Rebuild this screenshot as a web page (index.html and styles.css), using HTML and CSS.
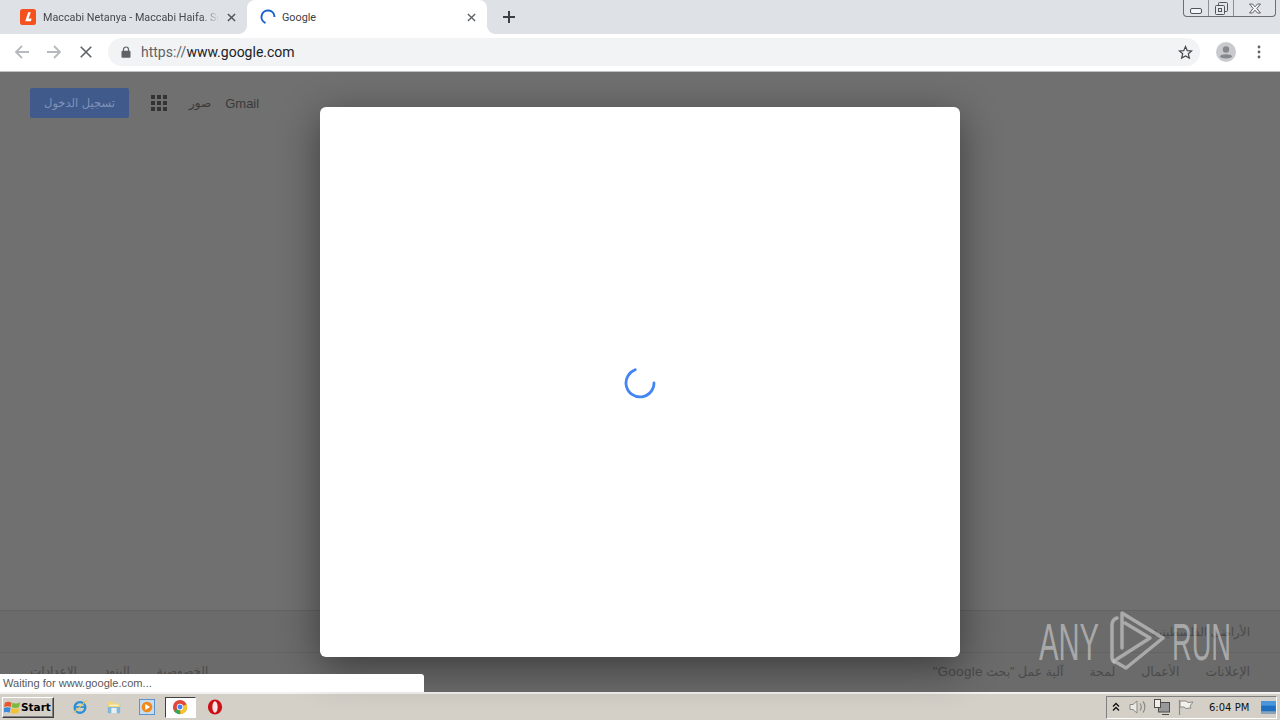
FILE: index.html
```html
<!DOCTYPE html>
<html lang="en">
<head>
<meta charset="utf-8">
<title>Google</title>
<link rel="stylesheet" href="styles.css">
</head>
<body>
<div class="screen">
  <header class="tabstrip">
    <div class="tab tab-inactive">
      <svg class="favicon" viewBox="0 0 16 16"><rect width="16" height="16" rx="2.5" fill="#f4511e"/><path d="M8.2 3.2h2.6L8.600 9.600h3l-.7 2.600H5.200z" fill="#fff"/></svg>
      <span class="tab-title tab-title-fade">Maccabi Netanya - Maccabi Haifa. Sc</span>
      <svg class="tab-close" viewBox="0 0 10 10"><path d="M1 1l8 8M9 1l-8 8" stroke="#50545a" stroke-width="1.6"/></svg>
    </div>
    <div class="tab tab-active">
      <svg class="favicon" viewBox="0 0 16 16"><path d="M5.500 14A6.500 6.500 0 1 1 14.500 8" fill="none" stroke="#1a62cc" stroke-width="2"/></svg>
      <span class="tab-title">Google</span>
      <svg class="tab-close" viewBox="0 0 10 10"><path d="M1 1l8 8M9 1l-8 8" stroke="#5f6368" stroke-width="1.5"/></svg>
    </div>
    <svg class="new-tab" viewBox="0 0 12 12"><path d="M6 0v12M0 6h12" stroke="#3c4043" stroke-width="2"/></svg>
    <div class="win-controls">
      <div class="win-btn win-min"><svg viewBox="0 0 12 6" width="12" height="6"><rect x=".5" y=".5" width="11" height="5" rx="1.5" fill="#f4f5f7" stroke="#50545c"/></svg></div>
      <div class="win-btn win-max"><svg viewBox="0 0 13 13" width="13" height="13"><rect x="3.500" y=".5" width="9" height="9" rx="1" fill="none" stroke="#50545c"/><rect x=".5" y="3.500" width="9" height="9" rx="1" fill="#e6e8ec" stroke="#50545c"/><rect x="3.500" y="6.500" width="3" height="3" fill="none" stroke="#50545c"/></svg></div>
      <div class="win-btn win-close"><svg viewBox="0 0 14 11" width="14" height="11"><path d="M1.500 1h3L7 3.800 9.500 1h3L8.800 5.500 12.500 10h-3L7 7.200 4.500 10h-3l3.700-4.500z" fill="#f4f5f7" stroke="#50545c" stroke-width=".9"/></svg></div>
    </div>
  </header>

  <nav class="toolbar">
    <svg class="nav-icon" viewBox="0 0 16 16"><path d="M15 8H2M8 2L2 8l6 6" fill="none" stroke="#b6b9bd" stroke-width="1.800"/></svg>
    <svg class="nav-icon" viewBox="0 0 16 16"><path d="M1 8h13M8 2l6 6-6 6" fill="none" stroke="#b6b9bd" stroke-width="1.800"/></svg>
    <svg class="nav-icon nav-stop" viewBox="0 0 16 16"><path d="M2 2l12 12M14 2L2 14" stroke="#5f6368" stroke-width="1.900"/></svg>
    <div class="omnibox">
      <svg class="lock" viewBox="0 0 10 12"><path d="M2.500 5V3.500a2.500 2.500 0 0 1 5 0V5" fill="none" stroke="#5f6368" stroke-width="1.200"/><rect y="4.800" x=".5" width="9" height="7" rx="1" fill="#5f6368"/></svg>
      <span class="url"><span class="url-dim">https://</span>www.google.com</span>
      <svg class="star" viewBox="0 0 16 16"><path d="M8 1.700l1.900 4.300 4.600.4-3.500 3 1.100 4.600L8 11.600 3.900 14l1.100-4.600-3.500-3 4.600-.4z" fill="none" stroke="#45484c" stroke-width="1.300"/></svg>
    </div>
    <svg class="avatar" viewBox="0 0 20 20"><circle cx="10" cy="10" r="10" fill="#c8cacd"/><circle cx="10" cy="7.500" r="3.200" fill="#85888c"/><path d="M3.800 14.500c1-3 11.400-3 12.400 0-1.500 2.500-10.900 2.500-12.400 0z" fill="#85888c"/></svg>
    <svg class="menu-dots" viewBox="0 0 4 14"><circle cx="2" cy="2" r="1.400" fill="#5f6368"/><circle cx="2" cy="7" r="1.400" fill="#5f6368"/><circle cx="2" cy="12" r="1.400" fill="#5f6368"/></svg>
  </nav>

  <main class="page">
    <div class="page-top">
      <div class="signin">تسجيل الدخول</div>
      <div class="apps">
        <i></i><i></i><i></i><i></i><i></i><i></i><i></i><i></i><i></i>
      </div>
      <span class="top-link top-images">صور</span>
      <span class="top-link">Gmail</span>
    </div>
    <footer class="page-foot">
      <div class="foot-row foot-country"><span>الأراضي الفلسطينية</span></div>
      <div class="foot-row foot-links">
        <div class="foot-group">
          <span>الإعدادات</span><span>البنود</span><span>الخصوصية</span>
        </div>
        <div class="foot-group foot-group-end">
          <span dir="rtl">آلية عمل "بحث <span class="foot-latin">Google</span>"</span><span>لمحة</span><span>الأعمال</span><span>الإعلانات</span>
        </div>
      </div>
    </footer>

    <div class="modal">
      <svg class="spinner" viewBox="0 0 32 32"><path d="M11.200 2.800A14 14 0 1 0 30 16" fill="none" stroke="#4285f4" stroke-width="2.800" stroke-linecap="round"/></svg>
    </div>

    <svg class="watermark" viewBox="0 0 200 64">
      <g fill="none" stroke="#c4c4c4" stroke-opacity=".7" stroke-width="3.500" stroke-linejoin="round" stroke-linecap="round">
        <path d="M78 10c-3 1-5 3-5 7v33c0 2 1 3 2 4"/>
        <path d="M83 40V5L124 30L87 60L75 53L111 30L86 15"/>
      </g>
      <text class="wm-text" x="0" y="52" textLength="60" lengthAdjust="spacingAndGlyphs">ANY</text>
      <text class="wm-text" x="133" y="52" textLength="59" lengthAdjust="spacingAndGlyphs">RUN</text>
    </svg>

    <div class="status-bubble">Waiting for www.google.com...</div>
  </main>

  <footer class="taskbar">
    <div class="start">
      <svg class="start-logo" viewBox="0 0 18 16"><path d="M1 3.500C4 2 6 2.500 8 3.500L7 8C5 7 3 6.800 0 8z" fill="#e8562a"/><path d="M9 3.500c2 1 5 1.500 8-.5l-1 5c-3 1.500-6 1-8 0z" fill="#7cb93c"/><path d="M0 9c3-1 5-1 7 0l-1 5c-2-1-4-1-7 0z" fill="#3f8ad8"/><path d="M8 9c2 1 5 1.500 8 0l-1 5c-3 1.500-6 1-8 0z" fill="#f5c12e"/></svg>
      <span>Start</span>
    </div>
    <div class="quick">
      <svg class="qi" viewBox="0 0 18 18"><circle cx="9" cy="9.500" r="6" fill="none" stroke="#2a8fd8" stroke-width="2.600"/><path d="M4 9h11" stroke="#2a8fd8" stroke-width="2"/><path d="M1.500 15.500C5 13 13 5 16.500 1.500" fill="none" stroke="#e8c84a" stroke-width="1.300"/></svg>
      <svg class="qi" viewBox="0 0 18 18"><path d="M2 6h14v10H2z" fill="#7fb8d8"/><path d="M2 3h6l1 2h7v4H2z" fill="#f0d878"/><rect x="6" y="10" width="6" height="6" fill="#e8eef2"/><path d="M4 7h10" stroke="#fff"/></svg>
      <svg class="qi" viewBox="0 0 18 18"><rect x=".5" y=".5" width="17" height="17" fill="#c7dcf0" stroke="#4f8cc8"/><circle cx="9" cy="9" r="6" fill="#f08a1c"/><path d="M7 5.500L12.500 9 7 12.500z" fill="#fff"/></svg>
      <div class="qi-active">
        <svg class="qi" viewBox="0 0 18 18"><circle cx="9" cy="9" r="8" fill="#e0483a"/><path d="M9 9L2.300 13.500A8 8 0 0 0 9.500 17z" fill="#3aa655"/><path d="M9 9l.5 8A8 8 0 0 0 16.500 6z" fill="#f6c62e"/><circle cx="9" cy="9" r="3.600" fill="#fff"/><circle cx="9" cy="9" r="2.800" fill="#4285f4"/></svg>
      </div>
      <svg class="qi" viewBox="0 0 18 18"><ellipse cx="9" cy="9" rx="8" ry="8.500" fill="#cc1018"/><ellipse cx="9" cy="9" rx="3" ry="6.500" fill="#fbe6e6"/></svg>
    </div>
    <div class="tray">
      <svg class="ti-up" viewBox="0 0 8 10"><path d="M1 4.500L4 1.500l3 3M1 8.500l3-3 3 3" fill="none" stroke="#111" stroke-width="1.300"/></svg>
      <svg class="ti" viewBox="0 0 18 16"><path d="M1 5.500h3L8 2v12L4 10.500H1z" fill="#eceae4" stroke="#8a8a86"/><path d="M11 4.500c1.500 2 1.500 5 0 7M14 2.500c2.500 3 2.500 8 0 11" fill="none" stroke="#8a8a86" stroke-width="1.200"/></svg>
      <svg class="ti" viewBox="0 0 18 16"><rect x="5.500" y="3.500" width="11" height="9.500" fill="#98989a" stroke="#4d4d4d"/><rect x="1.500" y=".5" width="6" height="8" fill="#f0eee8" stroke="#4d4d4d"/><path d="M9 15.500h7" stroke="#4d4d4d"/></svg>
      <svg class="ti" viewBox="0 0 18 16"><path d="M2.500 1v15" stroke="#8a8a86" stroke-width="1.200"/><path d="M3 2h6l2 1.500 5-.5-3 4 1 2-5 .5L7 8H3z" fill="#f3f1ec" stroke="#8a8a86"/></svg>
      <span class="clock">6:04 PM</span>
      <svg class="show-desktop" viewBox="0 0 16 14"><rect width="16" height="12" fill="#1f6fc0"/><rect width="16" height="5" fill="#4a96dc"/><rect y="11" width="16" height="3" fill="#8aa2ba"/></svg>
    </div>
  </footer>
</div>
</body>
</html>
```

FILE: styles.css
```css
* { box-sizing: border-box; }
html, body { margin: 0; padding: 0; }
body { font-family: "Liberation Sans", "DejaVu Sans", sans-serif; }
.screen { width: 1280px; height: 720px; display: flex; flex-direction: column; overflow: hidden; }

/* tab strip */
.tabstrip { height: 34px; background: #dee1e6; display: flex; align-items: stretch; flex: none; }
.tab { display: flex; align-items: center; font-family: "Roboto", sans-serif; font-size: 10.800px; color: #3c4043; }
.tab-inactive { width: 247px; padding-left: 20px; }
.tab-active { width: 240px; padding-left: 13px; background: #fff; border-radius: 8px 8px 0 0; position: relative; }
.tab-active::before, .tab-active::after { content: ""; position: absolute; bottom: 0; width: 8px; height: 8px; }
.tab-active::before { left: -8px; background: radial-gradient(circle at 0 0, transparent 7.500px, #fff 8px); }
.tab-active::after { right: -8px; background: radial-gradient(circle at 100% 0, transparent 7.500px, #fff 8px); }
.favicon { width: 16px; height: 16px; flex: none; }
.tab-title { margin-left: 7px; flex: 1; white-space: nowrap; overflow: hidden; }
.tab-active .tab-title { margin-left: 6px; }
.tab-title-fade { color: #45494e; -webkit-mask-image: linear-gradient(to right, #000 90%, transparent 100%); mask-image: linear-gradient(to right, #000 90%, transparent 100%); }
.tab-close { width: 9px; height: 9px; flex: none; margin: 0 11px 0 8px; }
.new-tab { width: 12px; height: 12px; flex: none; align-self: center; margin-left: 16px; }
.win-controls { margin-left: auto; margin-right: 4px; height: 17px; width: 93px; display: flex; border: 1px solid #6b6f76; border-top: 0; border-radius: 0 0 4px 4px; background: #e1e4e9; }
.win-btn { display: flex; align-items: center; justify-content: center; }
.win-min { width: 25px; border-right: 1px solid #8d9096; padding-top: 5px; }
.win-max { width: 25px; border-right: 1px solid #8d9096; padding-top: 1px; }
.win-close { flex: 1; }

/* toolbar */
.toolbar { height: 38px; flex: none; background: #fff; display: flex; align-items: center; border-bottom: 1px solid #c2c3c5; padding-bottom: 1px; }
.nav-icon { width: 16px; height: 16px; flex: none; margin-left: 16px; }
.nav-icon:first-child { margin-left: 14px; }
.nav-stop { width: 14px; height: 14px; margin-left: 17px; }
.omnibox { width: 1092px; height: 28px; margin-left: 15px; border-radius: 14px; background: #f1f3f4; display: flex; align-items: center; padding: 0 6px 0 13px; }
.lock { width: 10px; height: 12px; flex: none; }
.url { margin-left: 10px; font-family: "Roboto", sans-serif; font-size: 14px; color: #202124; flex: 1; white-space: nowrap; }
.url-dim { color: #5f6368; }
.star { width: 15px; height: 15px; flex: none; margin-right: 1px; }
.avatar { width: 20px; height: 20px; flex: none; margin-left: 16px; }
.menu-dots { width: 4px; height: 14px; flex: none; margin-left: 21px; }

/* dimmed page */
.page { flex: 1; min-height: 0; position: relative; background: #707070; display: flex; flex-direction: column; justify-content: space-between; }
.page-top { display: flex; align-items: center; padding: 16px 0 0 30px; }
.signin { width: 99px; height: 30px; background: #3f5a8b; border-radius: 2px; color: #7f93ba; font-size: 11.500px; display: flex; align-items: center; justify-content: center; font-family: "DejaVu Sans", sans-serif; }
.apps { display: grid; grid-template-columns: repeat(3, 4px); grid-auto-rows: 4px; gap: 2px; margin-left: 22px; }
.apps i { display: block; background: #333; }
.top-link { font-size: 13px; color: #3a3a3a; margin-left: 14px; }
.top-images { margin-left: 22px; font-size: 12px; }

.page-foot { display: flex; flex-direction: column; background: #6b6b6b; font-size: 12px; color: #4a4a4a; }
.foot-row { border-top: 1px solid #636363; padding: 0 30px; display: flex; }
.foot-country { height: 42px; justify-content: flex-end; align-items: center; }
.foot-links { height: 40px; justify-content: space-between; padding-top: 11px; }
.foot-group { display: flex; gap: 27px; }
.foot-group-end { font-size: 12.500px; gap: 26px; }
.foot-latin { font-size: 13.500px; letter-spacing: .3px; }

.modal { position: absolute; left: 320px; top: 35px; width: 640px; height: 550px; background: #fff; border-radius: 6px; box-shadow: 0 10px 40px rgba(0,0,0,.45); display: flex; align-items: center; justify-content: center; }
.spinner { width: 32px; height: 32px; margin-top: 2px; }

.watermark { position: absolute; left: 1039px; top: 536px; width: 200px; height: 64px; }
.wm-text { font-family: "Liberation Sans", sans-serif; font-size: 52px; fill: #c4c4c4; fill-opacity: .7; }

.status-bubble { position: absolute; left: 0; bottom: 0; width: 424px; height: 18px; background: #fff; border-radius: 0 3px 0 0; padding: 3px 0 0 3px; font-size: 11.100px; color: #5a5a5a; white-space: nowrap; }

/* taskbar */
.taskbar { height: 28px; flex: none; background: #d4d0c8; border-top: 2px solid #f4f2ee; display: flex; align-items: center; padding-right: 3px; }
.start { width: 52px; height: 21px; margin-left: 2px; border: 1px solid; border-color: #fff #404040 #404040 #fff; box-shadow: inset -1px -1px 0 #808080; display: flex; align-items: center; padding-left: 1px; font-family: "DejaVu Sans", sans-serif; font-weight: bold; font-size: 10.500px; color: #000; gap: 0; }
.start-logo { width: 17px; height: 16px; flex: none; }
.quick { display: flex; align-items: center; margin-left: 18px; }
.qi { width: 16px; height: 16px; flex: none; display: block; margin-right: 17.500px; }
.qi-active { width: 31px; height: 21px; background: #fff; border: 1px solid; border-color: #404040 #fff #fff #404040; display: flex; align-items: center; justify-content: center; margin: 0 11.500px 0 -8px; }
.qi-active .qi { margin: 0; }
.tray { margin-left: auto; width: 171px; height: 23px; border: 1px solid; border-color: #808080 #fff #fff #808080; display: flex; align-items: center; padding-left: 5px; }
.ti-up { width: 8px; height: 10px; flex: none; margin-right: 9px; }
.ti { width: 18px; height: 16px; flex: none; margin-right: 6px; }
.clock { font-family: "DejaVu Sans", sans-serif; font-size: 10px; color: #111; margin-left: 8px; white-space: nowrap; }
.show-desktop { width: 15px; height: 13px; flex: none; margin-left: auto; }
```
